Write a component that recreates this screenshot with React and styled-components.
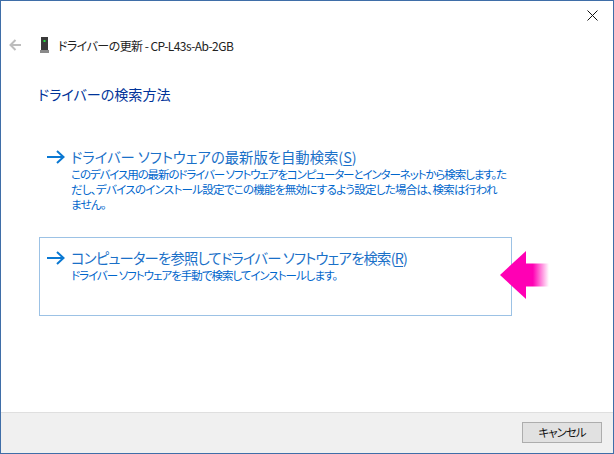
import * as React from 'react';
import styled, { createGlobalStyle } from 'styled-components';

const GlobalStyle = createGlobalStyle`
  html, body {
    margin: 0;
    padding: 0;
    background: #fff;
  }
  * {
    box-sizing: border-box;
  }
`;

const Window = styled.div`
  position: relative;
  width: 614px;
  height: 454px;
  display: flex;
  flex-direction: column;
  background: #fff;
  border: 1px solid #3f6ea8;
  font-family: 'Noto Sans CJK JP', 'Noto Sans', sans-serif;
  font-feature-settings: 'palt';
  overflow: hidden;
`;

const TopBar = styled.div`
  height: 35px;
  flex: none;
  display: flex;
  justify-content: flex-end;
  padding: 6px 4px 0 0;
`;

const CloseButton = styled.button`
  width: 34px;
  height: 16px;
  padding: 0;
  border: 0;
  background: none;
  display: flex;
  align-items: center;
  justify-content: center;
`;

const TitleRow = styled.div`
  height: 18px;
  flex: none;
  display: flex;
  align-items: center;
  padding-left: 8px;
  font-size: 12px;
  letter-spacing: -0.55px;
  color: #222;
`;

const DeviceIcon = styled.svg`
  margin: 0 9px 0 19px;
`;

const Body = styled.main`
  flex: 1;
  display: flex;
  flex-direction: column;
  padding: 30px 101px 0 38px;
`;

const Heading = styled.h1`
  margin: 0 0 0 -1px;
  font-size: 14.1px;
  line-height: 20px;
  font-weight: 400;
  color: #003399;
`;

const Option = styled.div`
  width: 473px;
  display: grid;
  grid-template-columns: 24px 1fr;
  padding: ${(p) => (p.$framed ? '10px 6px 0 7px' : '9px 6px 0 7px')};
  height: ${(p) => p.$height}px;
  margin-top: ${(p) => p.$top}px;
  border: 1px solid ${(p) => (p.$framed ? '#9cc2e5' : 'transparent')};
`;

const OptionArrow = styled.svg`
  margin-top: 3px;
`;

const OptionTitle = styled.div`
  font-size: 14.35px;
  line-height: 20px;
  letter-spacing: ${(p) => p.$tracking || 0}px;
  color: #1a70c8;
  white-space: nowrap;
  u {
    text-underline-offset: 2px;
  }
`;

const OptionText = styled.p`
  margin: 0;
  font-size: 11.5px;
  line-height: 15px;
  color: #0066cc;
`;

const OptionLine = styled.span`
  display: block;
  white-space: nowrap;
  letter-spacing: ${(p) => p.$tracking}px;
`;

const Footer = styled.footer`
  height: 41px;
  flex: none;
  display: flex;
  justify-content: flex-end;
  padding: 9px 11px 0 0;
  background: #f0f0f0;
  border-top: 1px solid #dfdfdf;
`;

const CancelButton = styled.button`
  width: 80px;
  height: 21px;
  padding: 0;
  background: #e1e1e1;
  border: 1px solid #adadad;
  font-family: inherit;
  font-feature-settings: inherit;
  font-size: 11.5px;
  letter-spacing: -1px;
  line-height: 17px;
  color: #111;
`;

const Pointer = styled.svg`
  position: absolute;
  left: 499px;
  top: 250px;
`;

const App = () => (
  <Window>
    <GlobalStyle />
    <TopBar>
      <CloseButton aria-label="閉じる">
        <svg width="11" height="11" viewBox="0 0 11 11">
          <path d="M0.5 0.5L10.5 10.5M10.5 0.5L0.5 10.5" stroke="#111" strokeWidth="1" fill="none" />
        </svg>
      </CloseButton>
    </TopBar>
    <TitleRow>
      <svg width="12" height="12" viewBox="0 0 12 12">
        <path d="M12 6H1.500M6.500 1L1.500 6L6.500 11" stroke="#bdbdbd" strokeWidth="2" fill="none" />
      </svg>
      <DeviceIcon width="9" height="16" viewBox="0 0 9 16">
        <rect x="1" y="0" width="7" height="14" fill="#3a3a3a" />
        <rect x="0" y="13" width="9" height="3" fill="#8a8a8a" />
        <rect x="3.500" y="3" width="2" height="2" fill="#22e03c" />
      </DeviceIcon>
      <span>ドライバーの更新 - CP-L43s-Ab-2GB</span>
    </TitleRow>
    <Body>
      <Heading>ドライバーの検索方法</Heading>
      <Option $height={94} $top={33}>
        <OptionArrow width="18" height="14" viewBox="0 0 18 14">
          <path d="M0 7H16.500M10 1L16.500 7L10 13" stroke="#0a78d2" strokeWidth="2" fill="none" />
        </OptionArrow>
        <div>
          <OptionTitle>
            ドライバー ソフトウェアの最新版を自動検索(<u>S</u>)
          </OptionTitle>
          <OptionText>
            <OptionLine $tracking={-1.1}>
              このデバイス用の最新のドライバー ソフトウェアをコンピューターとインターネットから検索します。た
            </OptionLine>
            <OptionLine $tracking={-0.72}>
              だし、デバイスのインストール設定でこの機能を無効にするよう設定した場合は、検索は行われ
            </OptionLine>
            <OptionLine $tracking={-0.72}>ません。</OptionLine>
          </OptionText>
        </div>
      </Option>
      <Option $framed $height={79} $top={6}>
        <OptionArrow width="18" height="14" viewBox="0 0 18 14">
          <path d="M0 7H16.500M10 1L16.500 7L10 13" stroke="#0a78d2" strokeWidth="2" fill="none" />
        </OptionArrow>
        <div>
          <OptionTitle $tracking={-0.8}>
            コンピューターを参照してドライバー ソフトウェアを検索(<u>R</u>)
          </OptionTitle>
          <OptionText>
            <OptionLine $tracking={-1}>ドライバー ソフトウェアを手動で検索してインストールします。</OptionLine>
          </OptionText>
        </div>
      </Option>
    </Body>
    <Footer>
      <CancelButton>キャンセル</CancelButton>
    </Footer>
    <Pointer width="50" height="50" viewBox="0 0 50 50">
      <defs>
        <linearGradient id="tailFade" x1="26" x2="49" y1="0" y2="0" gradientUnits="userSpaceOnUse">
          <stop offset="0.3" stopColor="#ff00b4" />
          <stop offset="1" stopColor="#ff00b4" stopOpacity="0" />
        </linearGradient>
      </defs>
      <path d="M0 24L26 0V48Z" fill="#ff00b4" />
      <rect x="26" y="12.500" width="23" height="23" fill="url(#tailFade)" />
    </Pointer>
  </Window>
);

export default App;
